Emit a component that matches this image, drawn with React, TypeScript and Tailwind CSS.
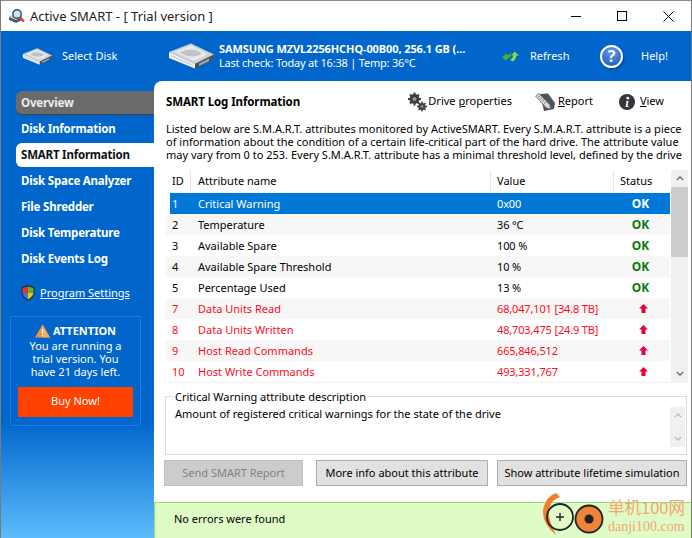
import React from "react";

const FONT = "[font-family:'Noto_Sans','Open_Sans',sans-serif]";

const rows = [
  { id: "1", name: "Critical Warning", value: "0x00", ok: true, selected: true },
  { id: "2", name: "Temperature", value: "36 °C", ok: true },
  { id: "3", name: "Available Spare", value: "100 %", ok: true },
  { id: "4", name: "Available Spare Threshold", value: "10 %", ok: true },
  { id: "5", name: "Percentage Used", value: "13 %", ok: true },
  { id: "7", name: "Data Units Read", value: "68,047,101 [34.8 TB]", ok: false },
  { id: "8", name: "Data Units Written", value: "48,703,475 [24.9 TB]", ok: false },
  { id: "9", name: "Host Read Commands", value: "665,846,512", ok: false },
  { id: "10", name: "Host Write Commands", value: "493,331,767", ok: false },
];

const navItems = ["Overview", "Disk Information", "SMART Information", "Disk Space Analyzer", "File Shredder", "Disk Temperature", "Disk Events Log"];

const DiskIcon = ({ className }: { className: string }) => (
  <svg viewBox="0 0 47 26" className={className}>
    <path d="M1 9 L23 .5 L46 11.5 L27 21 Z" fill="#cfd2d5" />
    <path d="M6 9 L23 2.5 L40 11 L26 18 Z" fill="#e6e8ea" />
    <path d="M12 9.5 Q24 3 34 10.5 Q24 17 12 9.5 Z" fill="#bfc3c7" />
    <path d="M1 9 L27 21 L27 25.5 L1 15 Z" fill="#f2f3f4" />
    <path d="M3 12.5 L25 22.5" stroke="#b0b4b8" strokeWidth="0.8" />
    <path d="M27 21 L46 11.5 L46 16.5 L27 25.5 Z" fill="#4e5257" />
    <path d="M31 20.5 L41 15.5 L41 18 L31 23 Z" fill="#a4a8ac" />
  </svg>
);

const Gears = () => (
  <svg viewBox="0 0 20 20" className="w-5 h-5">
    <g fill="#3b3f44">
      <circle cx="7.5" cy="7" r="5" />
      <circle cx="15" cy="14.5" r="3.6" />
      <g stroke="#3b3f44" strokeWidth="2">
        <path d="M7.5 0.5v13M1 7h13M3 2.5l9 9M12 2.5l-9 9" />
        <path d="M15 9.5v10M10 14.5h10M11.5 11l7 7M18.5 11l-7 7" strokeWidth="1.5" />
      </g>
    </g>
    <circle cx="7.5" cy="7" r="2" fill="#8f9296" />
    <circle cx="15" cy="14.5" r="1.4" fill="#8f9296" />
  </svg>
);

const ReportIcon = () => (
  <svg viewBox="0 0 20 18" className="w-5 h-[18px]">
    <path d="M5 1 L13 0.5 L20 10 L19 16 L9 18 Z" fill="#4f5358" />
    <path d="M0.5 3 L4 0.5 L15 12 L15.5 16 L11.5 15 Z" fill="#d7d9dc" stroke="#6a6e73" strokeWidth="0.8" />
    <path d="M3 4.5 L5.5 2.5 M5 6.5 L7.5 4.5 M7 8.5 L9.5 6.5 M9 10.5 L11.5 8.5" stroke="#6a6e73" strokeWidth="0.8" />
  </svg>
);

const InfoIcon = () => (
  <svg viewBox="0 0 16 16" className="w-4 h-4">
    <circle cx="8" cy="8" r="8" fill="#33363a" />
    <circle cx="8.8" cy="4.2" r="1.4" fill="#fff" />
    <path d="M7.2 7 h2.4 l-1.1 5 h1 l-.2 1 h-2.8 l1.1-5 h-.6z" fill="#fff" />
  </svg>
);

const RefreshIcon = () => (
  <svg viewBox="0 0 17 11" className="w-[17px] h-[11px]">
    <path d="M0 6.5 L5 2 L5 4 Q7.5 4 9.5 1.5 L9 5 Q7.5 7.5 5 7.5 L5 10 Z" fill="#4fae2c" />
    <path d="M17 4.5 L12.5 .5 L9.5 4.5 L11.5 4.5 Q11 7 8 9 L11 10.5 Q14 8.5 14.5 4.5 Z" fill="#8ddb45" />
  </svg>
);

const HelpIcon = () => (
  <div className="w-[23px] h-[23px] shrink-0 rounded-full bg-[radial-gradient(circle_at_50%_25%,#5f9bea,#1c55b8)] border-2 border-white shadow-[1px_1px_2px_rgba(0,0,0,0.4)] flex items-center justify-center text-white text-[16px] font-bold leading-none">
    ?
  </div>
);

const Shield = () => (
  <svg viewBox="0 0 14 16" className="w-[14px] h-4">
    <path d="M7 0 L13.5 2 V8 Q13 13 7 16 Q1 13 .5 8 V2 Z" fill="#2b2f36" />
    <path d="M7 1.5 V8 H1.5 V3 Z" fill="#e5352b" />
    <path d="M7 1.5 L12.5 3 V8 H7 Z" fill="#59b52f" />
    <path d="M1.6 8 H7 V14.4 Q2.4 12 1.6 8 Z" fill="#2f7de1" />
    <path d="M7 8 H12.4 Q11.6 12 7 14.4 Z" fill="#f5c518" />
  </svg>
);

const Warning = () => (
  <svg viewBox="0 0 16 14" className="w-[15px] h-[14px]">
    <path d="M8 0 L16 14 H0 Z" fill="#f0913a" />
    <path d="M8 0 L16 14 H8 Z" fill="#f7a95a" />
    <rect x="7.2" y="5" width="1.6" height="5" fill="#fff" />
    <rect x="7.2" y="11" width="1.6" height="1.6" fill="#fff" />
  </svg>
);

const UpArrow = () => (
  <svg viewBox="0 0 9 9" className="w-[9px] h-[9px]">
    <path d="M4.5 0 L9 4.5 H6.5 V9 H2.5 V4.5 H0 Z" fill="#e6003c" />
  </svg>
);

const Chevron = ({ up, color = "#606060" }: { up: boolean; color?: string }) => (
  <svg viewBox="0 0 10 6" className="w-[8px] h-[5px]">
    <path d={up ? "M1 5 L5 1 L9 5" : "M1 1 L5 5 L9 1"} fill="none" stroke={color} strokeWidth="1.6" />
  </svg>
);

const Watermark = () => (
  <div className="absolute right-[6px] bottom-0 h-[48px] flex">
    <svg viewBox="0 0 68 48" className="w-[68px] h-[48px]">
      <path d="M16 3 Q6 6 3 20 Q2 34 16 45 Q8 30 9 21 Q10 10 20 7 Z" fill="#f07f2c" />
      <circle cx="20" cy="27" r="13" fill="none" stroke="#222" strokeWidth="1.8" />
      <path d="M16 27h8M20 23v8" stroke="#222" strokeWidth="1.4" />
      <circle cx="49" cy="29" r="13.5" fill="#ef8338" stroke="#222" strokeWidth="1.8" />
      <circle cx="49" cy="29" r="4.5" fill="#222" />
    </svg>
    <div className="flex flex-col pt-[6px]">
      <span className="text-[16.5px] text-[#f3a774] [font-family:'Noto_Sans_CJK_SC',sans-serif] leading-[22px] whitespace-nowrap">单机100网</span>
      <span className="text-[14px] text-[#f3a774] [font-family:'Liberation_Serif',serif] leading-[17px]">danji100.com</span>
    </div>
  </div>
);

export default function App() {
  return (
    <div className={`w-[692px] h-[538px] flex flex-col overflow-hidden border-x border-[#7a7a7a] bg-white text-[12px] text-black ${FONT}`}>
      {/* title bar */}
      <div className="h-[31px] shrink-0 flex items-center bg-white border-t border-[#8a8a8a]">
        <svg viewBox="0 0 16 14" className="w-4 h-[14px] ml-[8px]">
          <path d="M0 8 L7 5 L13 8 L13 11 L7 14 L0 11 Z" fill="#55595e" />
          <path d="M0 8 L7 5 L13 8 L7 11 Z" fill="#c8ccd0" />
          <circle cx="8" cy="5" r="4.2" fill="#cfe6f7" stroke="#22506f" strokeWidth="1.4" />
          <path d="M11 8.5 L15 12.5" stroke="#d8402f" strokeWidth="2.4" />
        </svg>
        <span className="ml-[5px] text-[13px] leading-none text-[#222]">Active SMART - [ Trial version ]</span>
        <div className="ml-auto flex items-center">
          <div className="w-[46px] flex justify-center"><div className="w-[10px] h-px bg-black" /></div>
          <div className="w-[46px] flex justify-center"><div className="w-[10px] h-[10px] border border-black" /></div>
          <div className="w-[46px] flex justify-center">
            <svg viewBox="0 0 11 11" className="w-[11px] h-[11px]"><path d="M.5 .5 L10.5 10.5 M10.5 .5 L.5 10.5" stroke="#000" strokeWidth="1" /></svg>
          </div>
        </div>
      </div>

      <div className="flex-1 min-h-0 flex flex-col bg-[linear-gradient(to_bottom,#0066cc_0%,#0066cc_77%,#5cbcfc_100%)]">
        {/* toolbar */}
        <div className="h-[50px] shrink-0 flex items-center text-white">
          <DiskIcon className="w-[31px] h-[17px] ml-[21px] shrink-0" />
          <span className="ml-[9px] w-[54px] shrink-0 text-[11px] whitespace-nowrap">Select Disk</span>
          <DiskIcon className="w-[47px] h-[26px] ml-[52px] shrink-0" />
          <div className="ml-[4px] w-[272px] shrink-0 leading-[14px] text-[11px] tracking-[-0.1px]">
            <div className="font-bold whitespace-nowrap">SAMSUNG MZVL2256HCHQ-00B00, 256.1 GB (...</div>
            <div className="whitespace-nowrap tracking-[-0.2px]">Last check: Today at 16:38 | Temp: 36°C</div>
          </div>
          <div className="ml-[11px] shrink-0"><RefreshIcon /></div>
          <span className="ml-[11px] w-[39px] shrink-0 text-[11px]">Refresh</span>
          <div className="ml-[31px]"><HelpIcon /></div>
          <span className="ml-[18px] text-[11px]">Help!</span>
        </div>

        <div className="flex-1 min-h-0 flex">
          {/* sidebar */}
          <div className="w-[153px] shrink-0 flex flex-col pt-[10px]">
            <div className="flex flex-col gap-[2px] pl-[15px]">
              {navItems.map((item) => (
                <div
                  key={item}
                  className={
                    "h-[24px] pl-[5px] flex items-center rounded-l-[6px] text-[11.5px] tracking-[-0.2px] font-bold whitespace-nowrap " +
                    (item === "Overview"
                      ? "bg-[#6b6b6b] text-[#ececec] border-b border-[#3f3f3f]"
                      : item === "SMART Information"
                        ? "bg-white text-[#111]"
                        : "text-white")
                  }
                >
                  {item}
                </div>
              ))}
            </div>
            <div className="mt-[14px] ml-[20px] flex items-center gap-[5px] text-white">
              <Shield />
              <span className="underline text-[11px]">Program Settings</span>
            </div>
            <div className="mt-[14px] ml-[9px] w-[131px] h-[110px] border border-[#1a7df0] rounded-b-[3px] px-[7px] pt-[7px] flex flex-col items-center text-white">
              <div className="flex items-center gap-[3px] h-[15px]">
                <Warning />
                <span className="font-bold text-[11px]">ATTENTION</span>
              </div>
              <div className="text-center text-[11px] leading-[13px] whitespace-nowrap">
                You are running a<br />trial version. You<br />have 21 days left.
              </div>
              <div className="mt-[9px] w-[115px] h-[30px] shrink-0 bg-[#ff4200] flex items-center justify-center text-[11px]">Buy Now!</div>
            </div>
          </div>

          {/* main panel */}
          <div className="flex-1 min-w-0 relative bg-white rounded-tl-[8px] flex flex-col">
            <div className="h-[41px] shrink-0 flex items-center pl-[12px] pr-[27px]">
              <span className="font-bold text-[11.5px] tracking-[-0.1px]">SMART Log Information</span>
              <div className="ml-auto flex items-center text-[11px]">
                <Gears />
                <span className="ml-[1px]">Drive <span className="underline">p</span>roperties</span>
                <span className="ml-[23px]"><ReportIcon /></span>
                <span className="ml-[3px]"><span className="underline">R</span>eport</span>
                <span className="ml-[26px]"><InfoIcon /></span>
                <span className="ml-[5px]"><span className="underline">V</span>iew</span>
              </div>
            </div>
            <p className="px-[12px] text-[11px] leading-[13px] h-[39px] whitespace-nowrap">
              Listed below are S.M.A.R.T. attributes monitored by ActiveSMART. Every S.M.A.R.T. attribute is a piece<br />
              of information about the condition of a certain life-critical part of the hard drive. The attribute value<br />
              may vary from 0 to 253. Every S.M.A.R.T. attribute has a minimal threshold level, defined by the drive
            </p>

            {/* attribute table */}
            <div className="mt-[9px] ml-[12px] mr-[3px] flex h-[213px] shrink-0 border-b border-[#f0f0f0]">
              <div className="flex-1 min-w-0 text-[11px]">
                <div className="h-[23px] flex items-center">
                  <div className="w-[25px] pl-[6px] h-full flex items-center border-r border-[#e5e5e5]">ID</div>
                  <div className="w-[300px] pl-[7px] h-full flex items-center border-r border-[#e5e5e5]">Attribute name</div>
                  <div className="w-[123px] pl-[6px] h-full flex items-center border-r border-[#e5e5e5]">Value</div>
                  <div className="flex-1 pl-[6px] h-full flex items-center">Status</div>
                </div>
                {rows.map((r, i) => {
                  const color = r.selected ? "text-white" : r.ok ? "text-black" : "text-[#ff0a1e]";
                  const bg = r.selected ? "bg-[linear-gradient(to_right,#ffffff_4px,#0078d7_4px)]" : i % 2 === 1 ? "bg-[#f7f7f7]" : "bg-white";
                  return (
                    <div key={r.id} className={`h-[21px] pt-[1px] flex items-center ${bg} ${color}`}>
                      <div className="w-[25px] pl-[6px]">{r.id}</div>
                      <div className="w-[300px] pl-[7px]">{r.name}</div>
                      <div className="w-[123px] pl-[6px] tracking-[-0.15px]">{r.value}</div>
                      <div className={"flex-1 flex justify-center " + (r.ok ? "pr-[3px]" : "pl-[2px] pb-[2px]")}>
                        {r.ok ? (
                          <span className={"font-bold text-[12px] " + (r.selected ? "text-white" : "text-[#0a7a10]")}>OK</span>
                        ) : (
                          <UpArrow />
                        )}
                      </div>
                    </div>
                  );
                })}
              </div>
              <div className="w-[17px] shrink-0 ml-px bg-[#f0f0f0] flex flex-col items-center">
                <div className="h-[17px] flex items-center justify-center"><Chevron up /></div>
                <div className="w-full h-[70px] bg-[#cdcdcd]" />
                <div className="mt-auto h-[17px] flex items-center justify-center"><Chevron up={false} /></div>
              </div>
            </div>

            {/* description group */}
            <div className="relative mt-[13px] ml-[11px] mr-[4px] h-[59px] shrink-0 border border-[#dcdcdc]">
              <span className="absolute -top-[8px] left-[8px] bg-white px-px text-[11px] leading-[15px]">Critical Warning attribute description</span>
              <div className="flex h-full pt-[9px] pr-[1px] pl-[9px] text-[11px]">
                <span className="leading-[15px]">Amount of registered critical warnings for the state of the drive</span>
                <div className="ml-auto mt-px w-[15px] h-[40px] bg-[#f0f0f0] flex flex-col items-center justify-between py-[6px]">
                  <Chevron up color="#b8b8b8" />
                  <Chevron up={false} color="#b8b8b8" />
                </div>
              </div>
            </div>

            <div className="mt-[5px] ml-[10px] mr-[4px] flex text-[11px] h-[26px] shrink-0">
              <div className="w-[139px] bg-[#cccccc] border border-[#bfbfbf] text-[#838383] flex items-center justify-center">Send SMART Report</div>
              <div className="ml-[13px] w-[172px] bg-[#e1e1e1] border border-[#adadad] flex items-center justify-center whitespace-nowrap">More info about this attribute</div>
              <div className="ml-[9px] w-[190px] bg-[#e1e1e1] border border-[#adadad] flex items-center justify-center whitespace-nowrap">Show attribute lifetime simulation</div>
            </div>

            <div className="mt-auto h-[36px] shrink-0 bg-[#e0fcc6] border-t border-l border-[#8fe078] flex items-center pl-[19px] pb-[2px] text-[11px]">
              No errors were found
            </div>
            <Watermark />
          </div>
        </div>
      </div>
    </div>
  );
}
